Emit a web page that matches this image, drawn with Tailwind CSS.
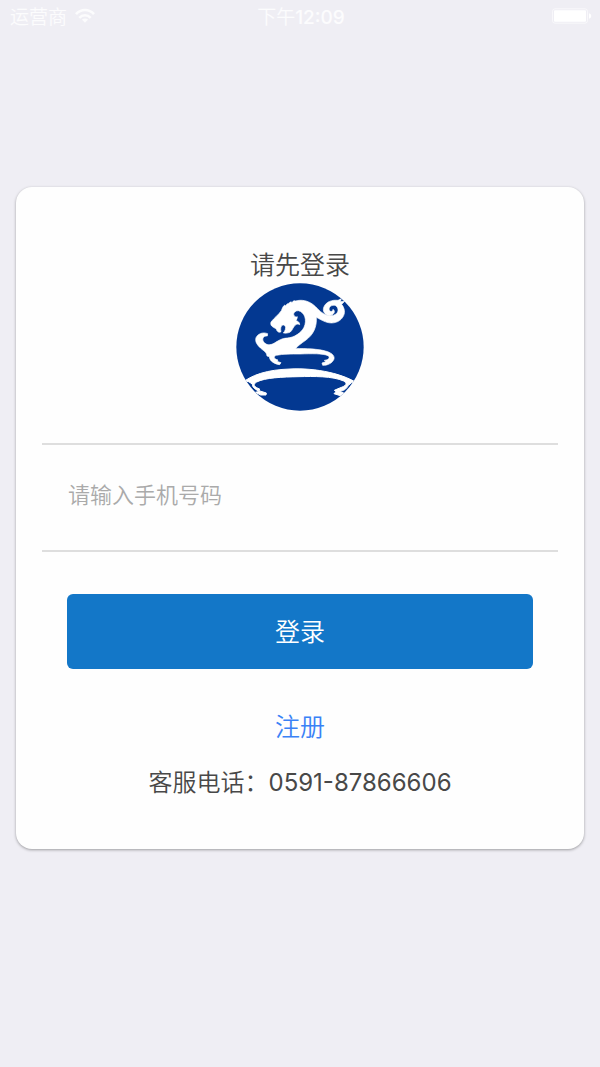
<!DOCTYPE html>
<html lang="zh-CN">
<head>
<meta charset="utf-8">
<meta name="viewport" content="width=device-width, initial-scale=1">
<title>请先登录</title>
<script src="https://cdn.jsdelivr.net/npm/@tailwindcss/browser@4"></script>
</head>
<body class="min-h-screen bg-[#efeef4] font-['Inter','Noto_Sans_CJK_SC',sans-serif] font-[350] text-[#484848]">
<header class="grid h-9 grid-cols-3 items-center pr-2 pl-2.5 text-[19px] leading-9 text-white/80">
  <div class="flex items-center gap-2">
    <span>运营商</span>
    <svg class="mb-1 h-4 w-5" viewBox="0 0 20 16" fill="none" stroke="currentColor" stroke-width="2.6" aria-label="Wi-Fi">
      <path d="M1 6.2C6 .6 14 .6 19 6.2M4.3 9.8C7.5 6.4 12.5 6.4 15.7 9.8"/>
      <path d="M10 14.8L6.9 11.6Q10 9.2 13.1 11.6Z" fill="currentColor" stroke="none"/>
    </svg>
  </div>
  <time class="text-center">下午<span class="font-medium">12:09</span></time>
  <svg class="mb-1 h-4 w-10 justify-self-end" viewBox="0 0 40 16" aria-label="电池">
    <rect x=".5" y=".8" width="35" height="14.4" rx="2.5" fill="none" stroke="#fff" stroke-opacity=".6"/>
    <rect x="2" y="2.3" width="32" height="11.4" rx="1" fill="#fff"/>
    <path d="M37 5.3q2.3.5 2.3 2.7T37 10.7Z" fill="#fff"/>
  </svg>
</header>
<main class="px-4 pt-[151px] pb-8">
  <form class="rounded-2xl bg-[#fefefe] px-[26px] pt-[61px] pb-12 shadow-[0_1px_3px_rgba(0,0,0,0.35)]">
    <div class="flex flex-col items-center border-b-2 border-[#dedede] pb-8">
      <h1 class="text-[25px] leading-[35px] font-[350]">请先登录</h1>
      <svg class="size-32" viewBox="18 15 384 384" aria-label="标志">
        <defs><clipPath id="disc"><circle cx="210" cy="207" r="191"/></clipPath></defs>
        <circle cx="210" cy="207" r="191" fill="#033891"/>
        <g clip-path="url(#disc)" fill="#fff" stroke="#fff" stroke-width="2" stroke-linejoin="round">
          <path d="M123 132C132 120 145 111 154 98C157 92 158 85 164 81L167 84C169 77 175 77 178 75C180 70 184 72 187 73C190 67 194 68 197 69C214 64 233 68 247 78C260 87 268 101 281 107C293 114 310 115 319 107C327 100 325 88 317 83C307 79 294 86 298 97C301 103 310 100 309 94C319 101 309 113 298 112C284 111 276 99 282 86C289 71 306 65 324 67L334 62L331 71L345 69L335 79C344 91 347 105 338 118C328 133 309 138 291 133C277 129 268 122 259 118C261 147 250 170 228 186C215 196 203 203 197 212C229 211 264 213 286 219C302 223 315 232 312 243C308 255 292 263 278 262L276 255L287 251L283 247C295 246 302 239 294 233C279 226 245 227 210 228C184 228 157 228 139 232C128 236 133 244 144 246L141 250L153 254L149 260C134 258 119 250 118 236L111 234C111 225 104 220 96 214C83 203 74 192 78 179C83 168 98 161 113 167L112 174C100 172 94 184 102 193C109 202 121 202 132 196C145 188 156 180 172 180C191 179 214 165 222 148C232 126 224 102 205 98C196 98 190 103 191 111C194 116 197 118 202 116C202 121 200 124 198 128C205 130 209 133 209 140C204 137 199 138 195 142C189 148 187 157 181 162C175 165 169 166 160 165C166 158 169 149 165 143C157 136 149 146 153 161C147 165 141 161 139 154C136 150 132 150 129 147C123 144 121 138 123 132Z"/>
          <path d="M30 320C62 290 114 275 180 273C259 269 345 288 388 320L366 313L355 322C349 334 340 339 328 340L343 346L331 353L312 347L318 341L313 337L329 330C350 323 353 316 341 309C308 294 250 295 207 296C156 297 105 299 80 312C66 320 73 327 89 333L87 338L109 345L108 351L92 351L76 343L89 340C77 336 66 328 67 318L54 310Z" stroke-width="3"/>
        </g>
      </svg>
    </div>
    <div class="border-b-2 border-[#dedede] px-[26px] py-6">
      <input type="tel" aria-label="手机号码" placeholder="请输入手机号码" class="block h-[57px] w-full bg-transparent pb-1.5 text-[22px] outline-none placeholder:text-[#aaaaaa]">
    </div>
    <div class="flex flex-col items-center px-[25px] pt-[42px]">
      <button type="submit" class="h-[75px] w-full rounded-md bg-[#1377c8] pt-0.5 text-[25px] font-[350] text-white">登录</button>
      <a href="#" class="mt-10 text-[25px] leading-9 text-[#3a82f6]">注册</a>
      <p class="mt-5 text-2xl leading-9">客服电话：<span class="font-normal">0591-87866606</span></p>
    </div>
  </form>
</main>
</body>
</html>
